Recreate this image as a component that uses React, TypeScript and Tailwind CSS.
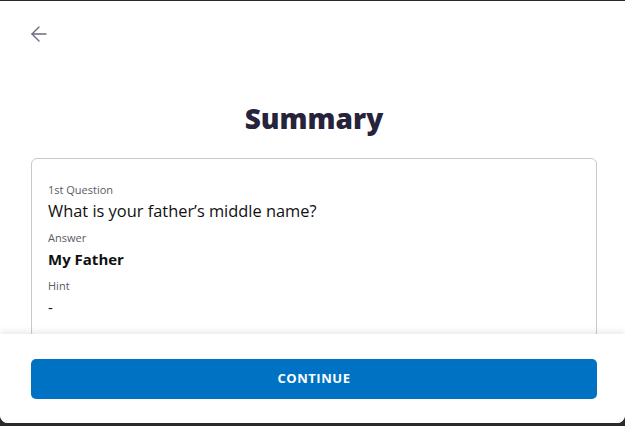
import { ArrowLeft } from "lucide-react";

const font = { fontFamily: '"Open Sans", "Liberation Sans", sans-serif' };

function Field({ label, value, bold, size = "text-[15px]" }: { label: string; value: string; bold?: boolean; size?: string }) {
  return (
    <div className="flex flex-col">
      <span className="text-[11px] leading-[14px] text-[#5c5a66]">{label}</span>
      <span className={`mt-[4px] leading-[20px] text-[#111] ${size} ${bold ? "font-bold" : ""}`}>
        {value}
      </span>
    </div>
  );
}

export default function App() {
  return (
    <div className="w-[625px] h-[426px] bg-[#2b2b2b] pt-px flex flex-col" style={font}>
      <div className="h-[422px] bg-white rounded-b-[8px] flex flex-col overflow-hidden">
        {/* scroll area */}
        <div className="flex-1 overflow-hidden pl-[31px] pr-[28px] pt-[21px]">
          <button className="block -ml-[4px] text-[#6b6880]">
            <ArrowLeft className="w-[24px] h-[24px]" strokeWidth={1.4} />
          </button>
          <h1 className="mt-[55px] h-[34px] text-center text-[28px] leading-[34px] font-extrabold text-[#26233a]">
            Summary
          </h1>
          <div className="mt-[23px] border border-[#c9c7d1] rounded-[6px] px-[16px] pt-[24px] pb-[20px] flex flex-col gap-[10px]">
            <Field label="1st Question" value="What is your father’s middle name?" size="text-[16.4px]" />
            <Field label="Answer" value="My Father" bold />
            <Field label="Hint" value="-" />
          </div>
        </div>

        {/* footer */}
        <div className="h-[89px] shrink-0 pl-[31px] pr-[28px] pt-[25px] bg-white shadow-[0_-3px_6px_rgba(0,0,0,0.08)] relative">
          <button className="w-full h-[40px] rounded-[5px] bg-[#0072c3] text-white text-[13px] font-bold tracking-[0.04em]">
            CONTINUE
          </button>
        </div>
      </div>
    </div>
  );
}
